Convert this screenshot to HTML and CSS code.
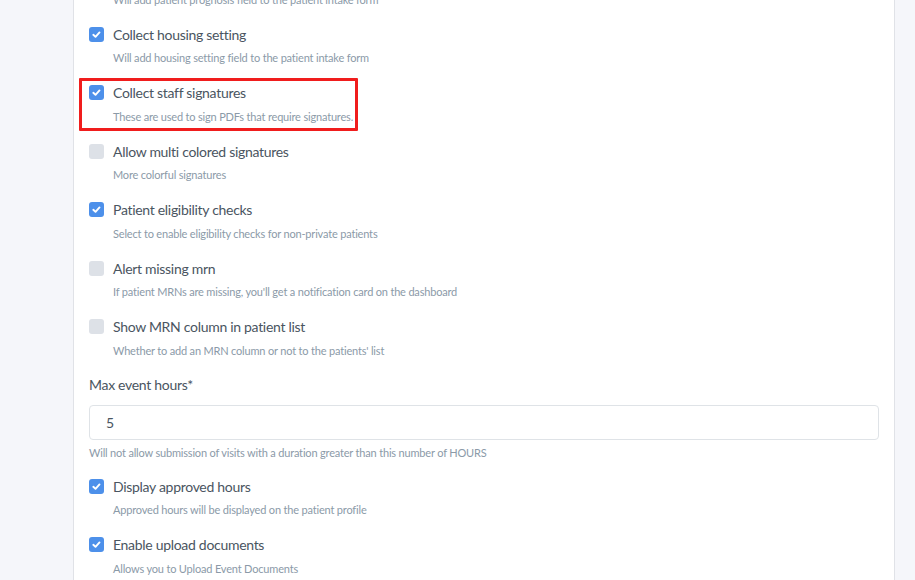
FILE: index.html
```html
<!DOCTYPE html>
<html>
<head>
<meta charset="utf-8">
<link rel="stylesheet" href="styles.css">
</head>
<body>
<div class="page">
  <div class="card">
    <div class="row">
      <div class="label-line"><span class="cb checked"></span><span class="label">Collect patient prognosis</span></div>
      <div class="desc">Will add patient prognosis field to the patient intake form</div>
    </div>
    <div class="row">
      <div class="label-line"><span class="cb checked"><svg viewBox="0 0 15 15"><path d="M4.3 7.8l2.2 2 4-4.4"/></svg></span><span class="label">Collect housing setting</span></div>
      <div class="desc">Will add housing setting field to the patient intake form</div>
    </div>
    <div class="row highlighted">
      <div class="label-line"><span class="cb checked"><svg viewBox="0 0 15 15"><path d="M4.3 7.8l2.2 2 4-4.4"/></svg></span><span class="label">Collect staff signatures</span></div>
      <div class="desc">These are used to sign PDFs that require signatures.</div>
      <div class="annot"></div>
    </div>
    <div class="row">
      <div class="label-line"><span class="cb"></span><span class="label">Allow multi colored signatures</span></div>
      <div class="desc">More colorful signatures</div>
    </div>
    <div class="row">
      <div class="label-line"><span class="cb checked"><svg viewBox="0 0 15 15"><path d="M4.3 7.8l2.2 2 4-4.4"/></svg></span><span class="label">Patient eligibility checks</span></div>
      <div class="desc">Select to enable eligibility checks for non-private patients</div>
    </div>
    <div class="row">
      <div class="label-line"><span class="cb"></span><span class="label">Alert missing mrn</span></div>
      <div class="desc">If patient MRNs are missing, you'll get a notification card on the dashboard</div>
    </div>
    <div class="row">
      <div class="label-line"><span class="cb"></span><span class="label">Show MRN column in patient list</span></div>
      <div class="desc">Whether to add an MRN column or not to the patients' list</div>
    </div>
    <div class="field">
      <div class="field-label">Max event hours*</div>
      <div class="input">5</div>
      <div class="help">Will not allow submission of visits with a duration greater than this number of HOURS</div>
    </div>
    <div class="row">
      <div class="label-line"><span class="cb checked"><svg viewBox="0 0 15 15"><path d="M4.3 7.8l2.2 2 4-4.4"/></svg></span><span class="label">Display approved hours</span></div>
      <div class="desc">Approved hours will be displayed on the patient profile</div>
    </div>
    <div class="row">
      <div class="label-line"><span class="cb checked"><svg viewBox="0 0 15 15"><path d="M4.3 7.8l2.2 2 4-4.4"/></svg></span><span class="label">Enable upload documents</span></div>
      <div class="desc">Allows you to Upload Event Documents</div>
    </div>
  </div>
</div>
</body>
</html>
```
FILE: styles.css
```css
html, body {
  margin: 0;
  padding: 0;
  background: #f5f6fa;
  overflow: hidden;
}
body {
  font-family: Lato, "Noto Sans", sans-serif;
  color: #4a5561;
}
.page {
  padding-left: 73px;
  width: 822px;
}
.card {
  background: #fff;
  border-left: 1px solid #e0e2e7;
  border-right: 1px solid #e0e2e7;
  padding: 0 15px 0 15px;
  margin-top: -34.5px;
  height: 700px;
}
.row {
  position: relative;
  padding-bottom: 16.5px;
}
.label-line {
  display: flex;
  align-items: center;
  height: 20px;
}
.cb {
  width: 15px;
  height: 15px;
  border-radius: 3px;
  background: #dde1e7;
  margin-right: 9px;
  flex: none;
  display: flex;
  align-items: center;
  justify-content: center;
}
.cb.checked {
  background: #4d90ea;
}
.cb svg {
  width: 15px;
  height: 15px;
}
.cb path {
  fill: none;
  stroke: #fff;
  stroke-width: 1.9;
  stroke-linecap: round;
  stroke-linejoin: round;
}
.label {
  font-size: 14px;
  letter-spacing: -0.3px;
  color: #4a5561;
}
.desc {
  margin-top: 6px;
  margin-left: 24px;
  font-size: 11px;
  letter-spacing: -0.18px;
  line-height: 16px;
  color: #8b9aa8;
}
.annot {
  position: absolute;
  left: -10px;
  top: -4.5px;
  width: 273px;
  height: 47px;
  border: 3px solid #f01d1d;
  border-radius: 1px;
}
.field {
  padding-bottom: 15px;
}
.field-label {
  font-size: 14px;
  letter-spacing: -0.3px;
  line-height: 20px;
  color: #4a5561;
}
.input {
  margin-top: 10px;
  height: 33px;
  border: 1px solid #dfe3e7;
  border-radius: 4px;
  padding-left: 16px;
  display: flex;
  align-items: center;
  font-size: 14px;
  color: #4a5561;
}
.help {
  margin-top: 5px;
  font-size: 11px;
  letter-spacing: -0.18px;
  line-height: 16px;
  color: #8b9aa8;
}
```
